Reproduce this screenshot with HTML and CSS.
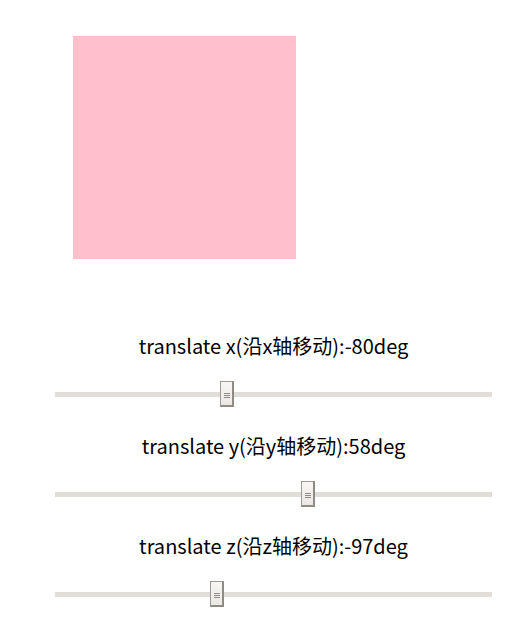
FILE: index.html
```html
<!DOCTYPE html>
<html>
<head>
<meta charset="utf-8">
<link rel="stylesheet" href="styles.css">
</head>
<body>
<div class="page">
  <div class="box"></div>
  <div class="controls">
    <div class="group">
      <div class="label">translate x(沿x轴移动):-80deg</div>
      <input class="range" type="range" min="-360" max="360" value="-80">
    </div>
    <div class="group">
      <div class="label">translate y(沿y轴移动):58deg</div>
      <input class="range" type="range" min="-360" max="360" value="58">
    </div>
    <div class="group">
      <div class="label">translate z(沿z轴移动):-97deg</div>
      <input class="range" type="range" min="-360" max="360" value="-97">
    </div>
  </div>
</div>
</body>
</html>
```
FILE: styles.css
```css
html, body {
  margin: 0;
  padding: 0;
  background: #fff;
}
.page {
  padding-top: 36px;
  font-family: "Noto Sans CJK SC", sans-serif;
  color: #000;
}
.box {
  width: 223px;
  height: 223px;
  margin-left: 73px;
  background: #ffc0cb;
}
.controls {
  margin-top: 75px;
  margin-left: 55px;
  width: 437px;
}
.group {
  display: flex;
  flex-direction: column;
  height: 100px;
}
.label {
  height: 26px;
  line-height: 26px;
  font-size: 20px;
  text-align: center;
  margin-top: -1px;
  margin-bottom: 22px;
}
.range {
  -webkit-appearance: none;
  appearance: none;
  display: block;
  width: 437px;
  height: 26px;
  margin: 0;
  padding: 0;
  background: transparent;
}
.range:focus { outline: none; }
.range::-webkit-slider-runnable-track {
  height: 5px;
  background: #e1ddd8;
  border: none;
}
.range::-webkit-slider-thumb {
  -webkit-appearance: none;
  width: 14px;
  height: 26px;
  margin-top: -10.5px;
  box-sizing: border-box;
  border: 1px solid #9d9892;
  border-right: 2px solid #8f8a84;
  border-bottom: 2px solid #8f8a84;
  background:
    linear-gradient(#8e8a86, #8e8a86) 3px 11px / 6px 1px no-repeat,
    linear-gradient(#8e8a86, #8e8a86) 3px 13px / 6px 1px no-repeat,
    linear-gradient(#8e8a86, #8e8a86) 3px 15px / 6px 1px no-repeat,
    linear-gradient(#f7f6f4, #ebe8e4);
}
```
